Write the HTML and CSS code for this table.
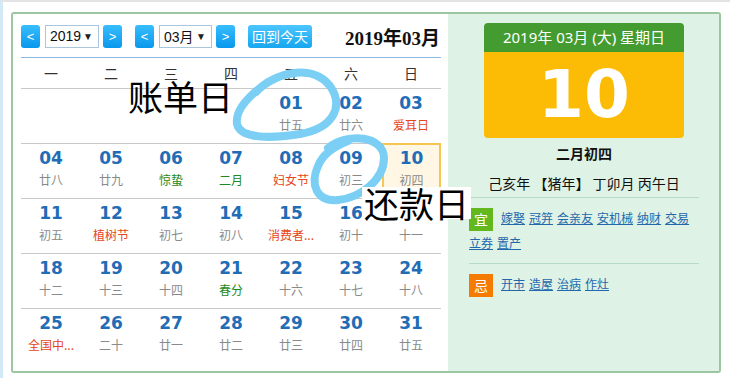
FILE: index.html
```html
<!DOCTYPE html>
<html lang="zh-CN">
<head>
<meta charset="utf-8">
<title>万年历</title>
<link rel="stylesheet" href="styles.css">
</head>
<body>
<div class="page">
  <div class="frame">
    <div class="cal">
      <div class="toolbar">
        <span class="btn nav">&lt;</span>
        <span class="sel sel-year">2019<i class="caret">▼</i></span>
        <span class="btn nav next">&gt;</span>
        <span class="btn nav gap">&lt;</span>
        <span class="sel sel-month">03月<i class="caret">▼</i></span>
        <span class="btn nav next">&gt;</span>
        <span class="btn today-btn">回到今天</span>
        <span class="title">2019年03月</span>
      </div>
      <div class="weekhead">
        <span>一</span><span>二</span><span>三</span><span>四</span><span>五</span><span>六</span><span>日</span>
      </div>
      <div class="row">
        <div class="cell empty"></div>
        <div class="cell empty"></div>
        <div class="cell empty"></div>
        <div class="cell empty"></div>
        <div class="cell"><b>01</b><small>廿五</small></div>
        <div class="cell"><b>02</b><small>廿六</small></div>
        <div class="cell"><b>03</b><small class="fest">爱耳日</small></div>
      </div>
      <div class="row">
        <div class="cell"><b>04</b><small>廿八</small></div>
        <div class="cell"><b>05</b><small>廿九</small></div>
        <div class="cell"><b>06</b><small class="term">惊蛰</small></div>
        <div class="cell"><b>07</b><small class="term">二月</small></div>
        <div class="cell"><b>08</b><small class="fest">妇女节</small></div>
        <div class="cell"><b>09</b><small>初三</small></div>
        <div class="cell today"><b>10</b><small>初四</small></div>
      </div>
      <div class="row">
        <div class="cell"><b>11</b><small>初五</small></div>
        <div class="cell"><b>12</b><small class="fest">植树节</small></div>
        <div class="cell"><b>13</b><small>初七</small></div>
        <div class="cell"><b>14</b><small>初八</small></div>
        <div class="cell"><b>15</b><small class="fest">消费者...</small></div>
        <div class="cell"><b>16</b><small>初十</small></div>
        <div class="cell"><b>17</b><small>十一</small></div>
      </div>
      <div class="row">
        <div class="cell"><b>18</b><small>十二</small></div>
        <div class="cell"><b>19</b><small>十三</small></div>
        <div class="cell"><b>20</b><small>十四</small></div>
        <div class="cell"><b>21</b><small class="term">春分</small></div>
        <div class="cell"><b>22</b><small>十六</small></div>
        <div class="cell"><b>23</b><small>十七</small></div>
        <div class="cell"><b>24</b><small>十八</small></div>
      </div>
      <div class="row last">
        <div class="cell"><b>25</b><small class="fest">全国中...</small></div>
        <div class="cell"><b>26</b><small>二十</small></div>
        <div class="cell"><b>27</b><small>廿一</small></div>
        <div class="cell"><b>28</b><small>廿二</small></div>
        <div class="cell"><b>29</b><small>廿三</small></div>
        <div class="cell"><b>30</b><small>廿四</small></div>
        <div class="cell"><b>31</b><small>廿五</small></div>
      </div>
    </div>
    <div class="side">
      <div class="datebox">
        <div class="dhead">2019年 03月 (大) 星期日</div>
        <div class="dbig">10</div>
      </div>
      <div class="lunar-title">二月初四</div>
      <div class="ganzhi">己亥年 【猪年】 丁卯月 丙午日</div>
      <div class="divider"></div>
      <div class="advice"><span class="badge yi">宜</span><a>嫁娶</a><a>冠笄</a><a>会亲友</a><a>安机械</a><a>纳财</a><a>交易</a><a>立券</a><a>置产</a></div>
      <div class="divider"></div>
      <div class="advice"><span class="badge ji">忌</span><a>开市</a><a>造屋</a><a>治病</a><a>作灶</a></div>
    </div>
  </div>
  <svg class="marks" width="730" height="378" viewBox="0 0 730 378">
    <path d="M 256,92 C 272,74 312,62 330,86 C 344,106 334,128 300,134 C 268,139 240,138 237,124 C 235,110 248,96 268,82" />
    <path d="M 328,148 C 348,132 384,136 384,158 C 384,180 360,198 338,200 C 316,202 310,184 318,166 C 322,156 330,148 348,141" />
  </svg>
  <span class="note note-bill">账单日</span>
  <span class="note note-pay">还款日</span>
</div>
</body>
</html>
```

FILE: styles.css
```css
* {
  box-sizing: border-box;
  margin: 0;
  padding: 0;
}

html,
body {
  width: 730px;
  height: 378px;
  overflow: hidden;
  background: #ffffff;
}

body {
  font-family: "Noto Sans CJK SC", "Noto Sans", sans-serif;
  color: #222222;
}

.page {
  position: relative;
  height: 378px;
  border-top: 2px solid #e3e3e3;
  border-left: 3px solid #d3eaf6;
  padding: 10px 0 0 8px;
}

.frame {
  width: 710px;
  height: 361px;
  border: 2px solid #9cc6a1;
  border-radius: 3px;
  display: flex;
  overflow: hidden;
}

/* ---------- calendar ---------- */
.cal {
  width: 435px;
  background: #ffffff;
  padding: 0 7px 0 8px;
}

.toolbar {
  height: 44px;
  padding-top: 1px;
  display: flex;
  align-items: center;
  border-bottom: 1px solid #8db8e2;
}

.btn {
  display: inline-flex;
  align-items: center;
  justify-content: center;
  height: 23px;
  border-radius: 3px;
  color: #ffffff;
  background: linear-gradient(#38bdff, #0898ec);
}

.nav {
  width: 19px;
  font-family: "Liberation Sans", sans-serif;
  font-size: 13px;
}

.nav.next {
  margin-left: 4px;
}

.nav.gap {
  margin-left: 13px;
}

.sel {
  display: inline-flex;
  align-items: center;
  justify-content: space-between;
  height: 23px;
  margin-left: 5px;
  padding: 0 5px 0 4px;
  border: 1px solid #a9c6de;
  background: #ffffff;
  font-family: "Liberation Sans", "Noto Sans CJK SC", sans-serif;
  font-size: 14px;
  color: #111111;
}

.sel-year {
  width: 54px;
}

.sel-month {
  width: 53px;
}

.caret {
  font-style: normal;
  font-size: 10px;
  color: #222222;
}

.today-btn {
  width: 64px;
  margin-left: 13px;
  font-size: 14px;
  background: linear-gradient(#4cc6ff, #18a6ef);
}

.title {
  margin-left: auto;
  margin-right: 1px;
  font-family: "Liberation Serif", "Noto Sans CJK SC", serif;
  font-weight: bold;
  font-size: 19px;
  color: #111111;
}

.weekhead {
  height: 31px;
  display: flex;
  align-items: center;
  border-bottom: 1px solid #c9c9c9;
}

.weekhead span {
  width: 60px;
  text-align: center;
  font-size: 14px;
  color: #333333;
}

.row {
  height: 55px;
  display: flex;
  border-bottom: 1px solid #c9c9c9;
}

.row.last {
  border-bottom: none;
}

.cell {
  width: 60px;
  height: 54px;
  padding-top: 4px;
  display: flex;
  flex-direction: column;
  align-items: center;
}

.cell b {
  display: block;
  height: 20px;
  line-height: 20px;
  font-family: "DejaVu Sans", sans-serif;
  font-weight: bold;
  font-size: 17px;
  color: #1f6db6;
}

.cell small {
  display: block;
  margin-top: 4px;
  line-height: 16px;
  font-size: 12px;
  color: #8a8a8a;
  white-space: nowrap;
}

.cell small.fest {
  color: #e5461c;
}

.cell small.term {
  color: #1d8a22;
}

.cell.today {
  width: 59px;
  height: 55px;
  margin-top: -1px;
  margin-left: 1px;
  padding-top: 5px;
  background: #fff7e3;
  box-shadow: inset 0 0 0 2px #f6c652;
}

/* ---------- side panel ---------- */
.side {
  width: 271px;
  background: #dff2e6;
  padding: 9px 20px 0 21px;
}

.datebox {
  width: 200px;
  margin-left: 15px;
}

.dhead {
  height: 29px;
  line-height: 29px;
  text-align: center;
  font-family: "Noto Sans", "Noto Sans CJK SC", sans-serif;
  font-size: 15px;
  color: #ffffff;
  background: #449b30;
  border-radius: 4px 4px 0 0;
}

.dbig {
  height: 86px;
  line-height: 86px;
  text-align: center;
  font-family: "DejaVu Sans", sans-serif;
  font-weight: bold;
  font-size: 66px;
  color: #ffffff;
  background: #fcbc05;
  border-radius: 0 0 4px 4px;
}

.lunar-title {
  margin-top: 5px;
  line-height: 20px;
  text-align: center;
  font-size: 14px;
  font-weight: bold;
  color: #111111;
}

.ganzhi {
  margin-top: 10px;
  line-height: 20px;
  text-align: center;
  font-size: 14px;
  color: #111111;
}

.divider {
  margin-top: 4px;
  border-top: 1px solid #b6dbc5;
}

.advice + .divider {
  margin-top: 0;
}

.advice {
  padding: 8px 0;
  line-height: 24px;
  font-size: 12px;
}

.advice a {
  display: inline-block;
  margin-right: 4px;
  color: #2468ac;
  text-decoration: underline;
}

.badge {
  display: inline-block;
  width: 24px;
  height: 23px;
  line-height: 23px;
  margin-right: 8px;
  vertical-align: middle;
  text-align: center;
  font-size: 14px;
  color: #ffffff;
}

.badge.yi {
  background: #62b81c;
}

.badge.ji {
  background: #f57b00;
}

/* ---------- annotations ---------- */
.marks {
  position: absolute;
  left: -3px;
  top: -2px;
  pointer-events: none;
}

.marks path {
  fill: none;
  stroke: #7ccff4;
  stroke-width: 8;
  stroke-linecap: round;
  stroke-linejoin: round;
}

.note {
  position: absolute;
  font-family: "Noto Sans CJK SC", sans-serif;
  font-size: 35px;
  line-height: 32px;
  color: #000000;
}

.note-bill {
  left: 125px;
  top: 78px;
}

.note-pay {
  left: 359px;
  top: 185px;
  padding: 0 2px;
  background: #ffffff;
}
```
